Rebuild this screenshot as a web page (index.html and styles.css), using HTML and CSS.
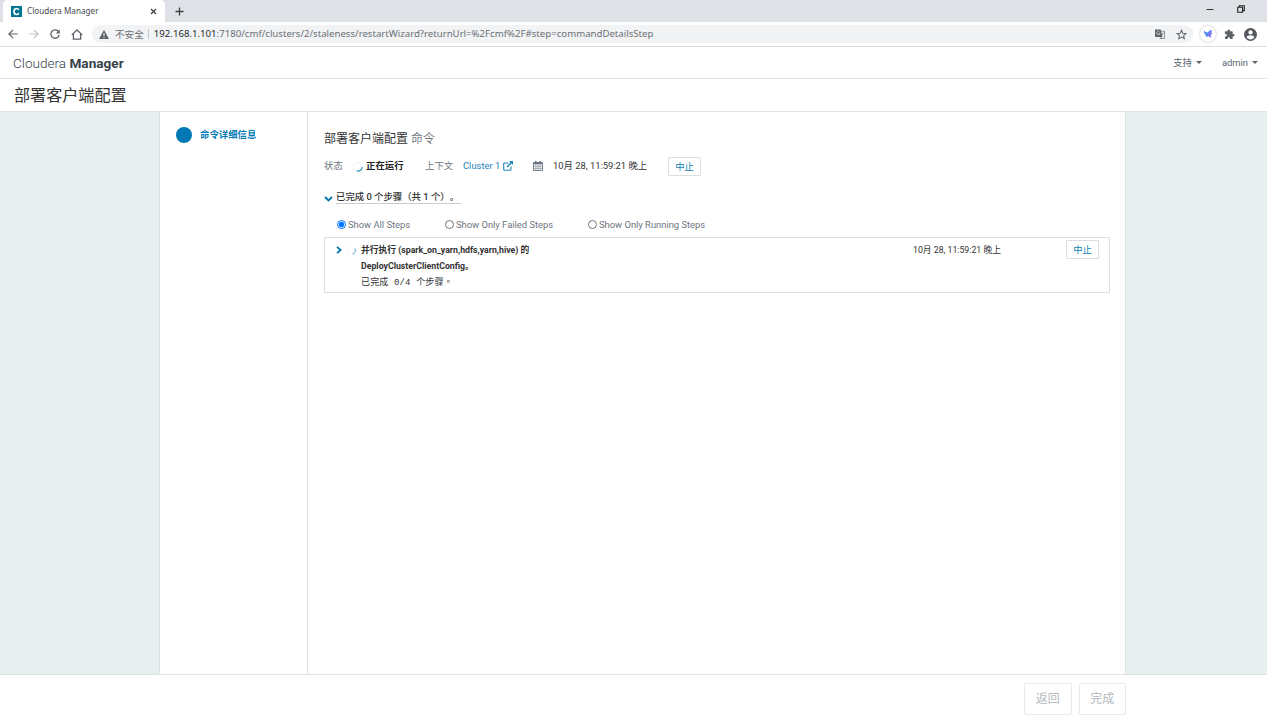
FILE: index.html
```html
<!DOCTYPE html>
<html lang="zh-CN">
<head>
    <meta charset="UTF-8">
    <title>Cloudera Manager</title>
    <link rel="stylesheet" href="styles.css">
</head>
<body>
    <!-- Browser chrome -->
    <div class="tabstrip">
        <div class="tab">
            <svg class="favicon" viewBox="0 0 11 11"><rect width="11" height="11" fill="#00758f"/><path d="M7.8 3.9C7.3 2.9 6.500 2.500 5.600 2.500 4.100 2.500 3 3.700 3 5.500s1.100 3 2.600 3c.9 0 1.700-.4 2.200-1.400" fill="none" stroke="#fff" stroke-width="1.700"/></svg>
            <span class="tab-title">Cloudera Manager</span>
            <svg class="tab-close" viewBox="0 0 7 7"><path d="M1 1l5 5M6 1L1 6" stroke="#3c4043" stroke-width="1.200"/></svg>
        </div>
        <svg class="new-tab" viewBox="0 0 9 9"><path d="M4.500 .5v8M.5 4.500h8" stroke="#3c4043" stroke-width="1.300"/></svg>
        <div class="window-buttons">
            <svg width="8" height="8" viewBox="0 0 8 8"><path d="M.5 4.500h7" stroke="#333"/></svg>
            <svg width="8" height="8" viewBox="0 0 8 8"><path d="M.7 2.300h4.800v4.900H.7zM2.300 2.300V.7h5v4.900H5.500" fill="none" stroke="#222" stroke-width="1.100"/></svg>
        </div>
    </div>
    <div class="toolbar">
        <div class="nav-icons">
            <svg width="10" height="10" viewBox="0 0 10 10"><path d="M9.700 5H1M5 .8L.9 5 5 9.200" fill="none" stroke="#5f6368" stroke-width="1.200"/></svg>
            <svg width="10" height="10" viewBox="0 0 10 10"><path d="M.3 5H9M5 .8L9.100 5 5 9.200" fill="none" stroke="#bdc1c6" stroke-width="1.200"/></svg>
            <svg width="10" height="10" viewBox="0 0 10 10"><path d="M8.600 2.700A4.200 4.200 0 1 0 9.200 6" fill="none" stroke="#5f6368" stroke-width="1.300"/><path d="M9.800.4v4H5.800z" fill="#5f6368"/></svg>
            <svg width="12" height="11" viewBox="0 0 12 11"><path d="M.8 5.900L6 1l5.200 4.900M2.400 5v5.200h7.200V5" fill="none" stroke="#5f6368" stroke-width="1.300"/></svg>
        </div>
        <div class="address">
            <svg class="warning" viewBox="0 0 10 9"><path d="M5 0l5 9H0z" fill="#5f6368"/><path d="M5 3v3M5 6.800v1.100" stroke="#fff"/></svg>
            <span class="insecure">不安全</span>
            <span class="divider"></span>
            <span class="url"><b>192.168.1.101</b>:7180/cmf/clusters/2/staleness/restartWizard?returnUrl=%2Fcmf%2F#step=commandDetailsStep</span>
            <svg class="translate" viewBox="0 0 10 10"><path d="M0 .5h5.600L7.500 8H0z" fill="#5f6368"/><path d="M5.900 2.200h3.600v7.300H4.800L6.900 8" fill="none" stroke="#777b80" stroke-width=".8"/><path d="M4.700 3.200A1.700 1.700 0 1 0 4.900 4.500H3.400" fill="none" stroke="#e3e5e8" stroke-width=".7"/><path d="M6.900 4.200h2M8.300 4.200L7 6.500" stroke="#777b80" stroke-width=".6"/></svg>
            <svg class="star" viewBox="0 0 24 24"><path d="M12 2.500l2.800 6.600 7.200.6-5.500 4.700 1.700 7L12 17.700l-6.200 3.700 1.700-7L2 9.700l7.200-.6z" fill="none" stroke="#5f6368" stroke-width="2.200"/></svg>
        </div>
        <span class="extension">
            <svg width="10" height="10" viewBox="0 0 10 10"><path d="M1 1.300c1 1.500 2.300 2.200 3.700 2.300C5.500 2.600 6.500 1.500 9 .8 8.400 2 8.200 3 8.300 3.800L9 5.200 7.300 5.500C6.800 7 5.400 8 3.500 7.600L1.800 7l1.500-.6C1.600 5.700.8 3.700 1 1.300z" fill="#4f8df7"/><path d="M5.500 4.200L9 .8C8.400 2 8.200 3 8.300 3.800L9 5.200 7.300 5.500 8.700 9 5.200 7.100z" fill="#8c6cf2"/></svg>
        </span>
        <svg class="puzzle" viewBox="0 0 24 24"><path d="M20.500 11H19V7c0-1.100-.9-2-2-2h-4V3.500a2.500 2.500 0 0 0-5 0V5H4c-1.100 0-2 .9-2 2v3.800h1.500a2.700 2.700 0 0 1 0 5.400H2V20c0 1.100.9 2 2 2h3.800v-1.500a2.700 2.700 0 0 1 5.400 0V22H17c1.100 0 2-.9 2-2v-4h1.500a2.500 2.500 0 0 0 0-5z" fill="#5f6368"/></svg>
        <svg class="profile" viewBox="0 0 24 24"><path d="M12 0a12 12 0 1 0 0 24 12 12 0 0 0 0-24zm0 4.200a4 4 0 1 1 0 8 4 4 0 0 1 0-8zm0 16.800c-3 0-5.700-1.600-7.200-4 0-2.400 4.800-3.700 7.200-3.700s7.200 1.300 7.200 3.700c-1.500 2.400-4.200 4-7.200 4z" fill="#54585d"/></svg>
    </div>

    <!-- Cloudera Manager -->
    <header class="navbar">
        <div class="brand">Cloudera <b>Manager</b></div>
        <div class="menu menu-support">支持<span class="caret"></span></div>
        <div class="menu">admin<span class="caret"></span></div>
    </header>
    <h1 class="page-title">部署客户端配置</h1>

    <div class="wizard">
        <aside class="steps">
            <span class="step-dot"></span>
            <span class="step-name">命令详细信息</span>
        </aside>
        <main class="content">
            <h2>部署客户端配置 <small>命令</small></h2>
            <div class="status">
                <span class="label status-label">状态</span>
                <svg class="spinner" viewBox="0 0 10 10"><circle cx="5" cy="5" r="4.300" fill="none" stroke="#e8eef2" stroke-width=".8"/><path d="M9.200 5A4.200 4.200 0 0 1 3.900 9" fill="none" stroke="#2a8fc4" stroke-width="1.100"/></svg>
                <b class="running">正在运行</b>
                <span class="label context-label">上下文</span>
                <a class="cluster">Cluster 1</a>
                <svg class="external" viewBox="0 0 10 10"><path d="M5.500 2H1.800C1.100 2 .7 2.400.7 3v5.200c0 .6.4 1 1.100 1H7c.7 0 1-.4 1-1V5.500" fill="none" stroke="#1f83bd" stroke-width="1.100"/><path d="M4 6l4.500-4.500" stroke="#1f83bd" stroke-width="1.500"/><path d="M6 0h4v4z" fill="#1f83bd"/></svg>
                <svg class="calendar" viewBox="0 0 10 10"><path d="M.5 1.500h9v8h-9z" fill="#fff" stroke="#6e7685" stroke-width=".9"/><path d="M.5 1.300h9v2h-9zM2 0h1.500v2H2zM6.500 0H8v2H6.500z" fill="#6e7685"/><path d="M2.800 3v6.500M5 3v6.500M7.200 3v6.500M.5 5.300h9M.5 7.400h9" stroke="#7d8492" stroke-width=".6"/></svg>
                <span class="date">10月 28, 11:59:21 晚上</span>
                <button class="abort">中止</button>
            </div>
            <div class="progress">
                <svg class="chevron-down" viewBox="0 0 9 6"><path d="M1 1l3.500 3.400L8 1" fill="none" stroke="#0277ad" stroke-width="1.900"/></svg>
                <span class="progress-text">已完成 0 个步骤（共 1 个）。</span>
            </div>
            <div class="filters">
                <label class="filter-all"><input type="radio" name="filter" checked><span>Show All Steps</span></label>
                <label class="filter-failed"><input type="radio" name="filter"><span>Show Only Failed Steps</span></label>
                <label><input type="radio" name="filter"><span>Show Only Running Steps</span></label>
            </div>
            <div class="command">
                <svg class="chevron-right" viewBox="0 0 6 8"><path d="M1 .8L4.600 4 1 7.200" fill="none" stroke="#0277ad" stroke-width="1.800"/></svg>
                <svg class="spinner-small" viewBox="0 0 9 9"><circle cx="4.500" cy="4.500" r="3.900" fill="none" stroke="#eef2f5" stroke-width=".7"/><path d="M7.800 2.500A3.900 3.900 0 0 1 5.500 8.200" fill="none" stroke="#5ba7cf" stroke-width="1"/></svg>
                <div class="command-text">
                    <div class="command-name">并行执行 (spark_on_yarn,hdfs,yarn,hive) 的<br>DeployClusterClientConfig。</div>
                    <div class="command-result">已完成 0/4 个步骤<span lang="zh-TW" class="full-stop">。</span></div>
                </div>
                <span class="command-date">10月 28, 11:59:21 晚上</span>
                <button class="abort">中止</button>
            </div>
        </main>
    </div>

    <footer class="footer">
        <button disabled>返回</button>
        <button disabled>完成</button>
    </footer>
</body>
</html>
```
FILE: styles.css
```css
* {
    box-sizing: border-box;
}
body {
    margin: 0;
    height: 717px;
    display: flex;
    flex-direction: column;
    overflow: hidden;
    background: #fff;
    color: #333;
    font-family: Roboto, "Noto Sans CJK SC", sans-serif;
    font-size: 9.4px;
    white-space: nowrap;
    text-spacing-trim: space-all;
}
svg {
    display: block;
    flex: none;
}
button {
    padding: 0;
    font-family: inherit;
    background: #fff;
}

/* browser */
.tabstrip {
    height: 22px;
    flex: none;
    display: flex;
    align-items: center;
    padding-left: 3px;
    background: #dee1e6;
}
.tab {
    width: 162px;
    height: 22px;
    display: flex;
    align-items: center;
    padding: 0 8px;
    background: #fff;
    border-radius: 5px 5px 0 0;
}
.favicon {
    width: 11px;
    height: 11px;
}
.tab-title {
    margin-left: 5px;
    flex: 1;
    font-family: "Noto Sans", sans-serif;
    font-size: 8.1px;
    letter-spacing: .05px;
    line-height: 10px;
    color: #45494d;
}
.tab-close {
    width: 7px;
    height: 7px;
}
.new-tab {
    width: 9px;
    height: 9px;
    margin-left: 10px;
}
.window-buttons {
    margin-left: auto;
    padding-right: 22px;
    padding-bottom: 4px;
    display: flex;
    gap: 23px;
}
.toolbar {
    height: 25px;
    flex: none;
    display: flex;
    align-items: center;
    padding: 0 9px 0 8px;
    border-bottom: 1px solid #dadce0;
}
.nav-icons {
    display: flex;
    align-items: center;
    gap: 11px;
}
.address {
    width: 1101px;
    height: 18px;
    margin-left: 9px;
    padding: 0 6px 0 7px;
    display: flex;
    align-items: center;
    background: #f1f3f4;
    border-radius: 9px;
    color: #6b6f74;
}
.warning {
    width: 10px;
    height: 9px;
}
.insecure {
    margin-left: 6px;
    font-size: 9.6px;
}
.divider {
    width: 1px;
    height: 10px;
    margin: 0 5px 0 4px;
    background: #c4c7cb;
}
.url {
    flex: 1;
    padding-bottom: 1px;
    font-family: "Noto Sans", sans-serif;
    font-size: 9.63px;
}
.url b {
    font-weight: normal;
    color: #27292c;
}
.translate {
    width: 10px;
    height: 10px;
    margin-right: 11px;
}
.star {
    width: 11px;
    height: 11px;
}
.extension {
    width: 16px;
    height: 16px;
    margin-left: 7px;
    display: flex;
    align-items: center;
    justify-content: center;
    border-radius: 50%;
    background: #fff;
    box-shadow: 0 0 2px #aaa;
}
.puzzle {
    width: 11px;
    height: 11px;
    margin-left: 8px;
}
.profile {
    width: 13px;
    height: 13px;
    margin-left: auto;
    margin-right: 1px;
}

/* header */
.navbar {
    height: 32px;
    flex: none;
    display: flex;
    align-items: center;
    padding: 0 9px 0 13px;
    border-bottom: 1px solid #e3e6e8;
}
.brand {
    flex: 1;
    font-size: 13.6px;
    font-weight: 300;
    color: #37424a;
}
.brand b {
    font-weight: 700;
}
.menu {
    display: flex;
    align-items: center;
    line-height: 12px;
    color: #5a656d;
}
.menu-support {
    margin-right: 20px;
}
.caret {
    margin-left: 4px;
    border: 3px solid transparent;
    border-top-color: #5a656d;
    border-bottom: 0;
}
.page-title {
    height: 33px;
    flex: none;
    margin: 0;
    padding-left: 14px;
    border-bottom: 1px solid #dfe3e6;
    font-size: 16.1px;
    font-weight: 400;
    line-height: 34px;
}

/* wizard */
.wizard {
    height: 562px;
    flex: none;
    display: flex;
    padding: 0 141px 0 159px;
    background: #e9eef1;
}
.steps {
    width: 148px;
    flex: none;
    display: flex;
    align-items: flex-start;
    padding: 15px 0 0 16px;
    background: #fff;
    border-left: 1px solid #dce1e4;
}
.step-dot {
    width: 16px;
    height: 16px;
    border-radius: 50%;
    background: #0079b5;
}
.step-name {
    margin-left: 8px;
    line-height: 16px;
    font-weight: 700;
    color: #0079b5;
}
.content {
    flex: 1;
    padding: 18px 15px 0 16px;
    background: #fff;
    border-left: 1px solid #dce1e4;
    border-right: 1px solid #dce1e4;
}
.content h2 {
    margin: 0;
    font-size: 12px;
    font-weight: 400;
    line-height: 18px;
}
.content h2 small {
    font-size: 12px;
    color: #74797e;
}
.status {
    height: 19px;
    margin-top: 9px;
    display: flex;
    align-items: center;
    line-height: 12px;
}
.status > span,
.status > b,
.status > a {
    padding-bottom: 2px;
}
.label {
    color: #6c757d;
}
.status-label {
    width: 29px;
}
.spinner {
    width: 10px;
    height: 10px;
    margin-right: 3px;
}
.running {
    width: 59px;
    color: #222;
}
.context-label {
    width: 38px;
}
.cluster {
    width: 40px;
    color: #1f83bd;
}
.external {
    width: 10px;
    height: 10px;
    margin-bottom: 2px;
}
.calendar {
    width: 10px;
    height: 10px;
    margin: 0 10px 1px 20px;
}
.date {
    width: 115px;
}
.abort {
    width: 33px;
    height: 19px;
    border: 1px solid #dcdfe1;
    border-radius: 1px;
    color: #0f7fb5;
    font-size: 9.33px;
    line-height: 15px;
}
.progress {
    height: 14px;
    margin-top: 14px;
    display: flex;
    align-items: center;
}
.chevron-down {
    width: 9px;
    height: 6px;
    margin: 3px 3px 0 0;
}
.progress-text {
    width: 125px;
    height: 14px;
    border-bottom: 1px solid #c8ccd0;
    font-weight: 500;
    line-height: 14px;
}
.filters {
    height: 12px;
    margin: 15px 0 6px;
    padding-left: 13px;
    display: flex;
    align-items: center;
    line-height: 12px;
    color: #6c757d;
}
.filters label {
    display: flex;
    align-items: center;
}
.filters input {
    width: 9px;
    height: 9px;
    margin: 0 2px 2px 0;
}
.filter-all {
    width: 108px;
}
.filter-failed {
    width: 143px;
}
.command {
    width: 786px;
    height: 56px;
    display: flex;
    align-items: flex-start;
    padding: 2px 10px 0 11px;
    border: 1px solid #dcdfe1;
}
.chevron-right {
    width: 6px;
    height: 8px;
    margin: 6px 6px 0 0;
}
.spinner-small {
    width: 9px;
    height: 9px;
    margin: 6px 5px 0 -1px;
}
.command-text {
    width: 552px;
}
.command-name {
    font-size: 8.75px;
    font-weight: 700;
    line-height: 16px;
    margin-top: 2px;
}
.command-result {
    font-family: "Liberation Mono", "Noto Sans CJK SC", monospace;
    font-size: 9px;
    letter-spacing: .15px;
    line-height: 15px;
}
.full-stop {
    font-family: "Noto Sans CJK TC", sans-serif;
}
.command-date {
    flex: 1;
    font-size: 8.75px;
    line-height: 20px;
}

/* footer */
.footer {
    flex: 1;
    display: flex;
    justify-content: flex-end;
    gap: 7px;
    padding: 8px 141px 0 0;
    border-top: 1px solid #dfe3e6;
}
.footer button {
    width: 47.5px;
    height: 32px;
    border: 1px solid #e8eaeb;
    border-radius: 2px;
    font-size: 12px;
    line-height: 28px;
    color: #b3b8bc;
}
```
